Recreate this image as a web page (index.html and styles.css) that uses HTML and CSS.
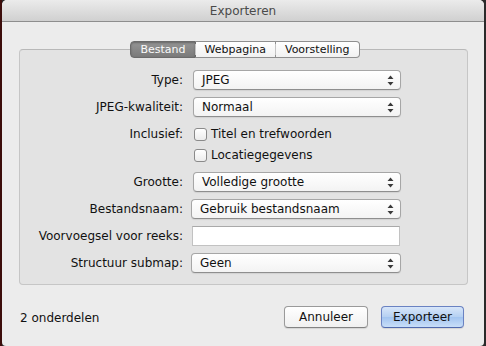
FILE: index.html
```html
<!DOCTYPE html>
<html lang="nl">
<head>
<meta charset="utf-8">
<title>Exporteren</title>
<link rel="stylesheet" href="styles.css">
</head>
<body>
<div class="window">
  <div class="titlebar">Exporteren</div>
  <div class="content">
    <div class="tabs">
      <div class="tab selected">Bestand</div>
      <div class="tab">Webpagina</div>
      <div class="tab last">Voorstelling</div>
    </div>
    <div class="box">
      <div class="form">
        <div class="row">
          <div class="label">Type:</div>
          <div class="popup"><span>JPEG</span><svg class="arrows" width="7" height="11" viewBox="0 0 7 11"><path d="M3.5 0.5 L6.5 4 L0.5 4 Z M0.5 7 L6.5 7 L3.5 10.5 Z" fill="#3a3a3a"/></svg></div>
        </div>
        <div class="row">
          <div class="label">JPEG-kwaliteit:</div>
          <div class="popup"><span>Normaal</span><svg class="arrows" width="7" height="11" viewBox="0 0 7 11"><path d="M3.5 0.5 L6.5 4 L0.5 4 Z M0.5 7 L6.5 7 L3.5 10.5 Z" fill="#3a3a3a"/></svg></div>
        </div>
        <div class="row group">
          <div class="label">Inclusief:</div>
          <div class="checks">
            <label class="check"><span class="box-check"></span>Titel en trefwoorden</label>
            <label class="check"><span class="box-check"></span>Locatiegegevens</label>
          </div>
        </div>
        <div class="row">
          <div class="label">Grootte:</div>
          <div class="popup"><span>Volledige grootte</span><svg class="arrows" width="7" height="11" viewBox="0 0 7 11"><path d="M3.5 0.5 L6.5 4 L0.5 4 Z M0.5 7 L6.5 7 L3.5 10.5 Z" fill="#3a3a3a"/></svg></div>
        </div>
        <div class="row">
          <div class="label">Bestandsnaam:</div>
          <div class="popup wide"><span>Gebruik bestandsnaam</span><svg class="arrows" width="7" height="11" viewBox="0 0 7 11"><path d="M3.5 0.5 L6.5 4 L0.5 4 Z M0.5 7 L6.5 7 L3.5 10.5 Z" fill="#3a3a3a"/></svg></div>
        </div>
        <div class="row">
          <div class="label">Voorvoegsel voor reeks:</div>
          <div class="field"></div>
        </div>
        <div class="row">
          <div class="label">Structuur submap:</div>
          <div class="popup wide"><span>Geen</span><svg class="arrows" width="7" height="11" viewBox="0 0 7 11"><path d="M3.5 0.5 L6.5 4 L0.5 4 Z M0.5 7 L6.5 7 L3.5 10.5 Z" fill="#3a3a3a"/></svg></div>
        </div>
      </div>
    </div>
    <div class="footer">
      <div class="count">2 onderdelen</div>
      <div class="buttons">
        <div class="button">Annuleer</div>
        <div class="button default">Exporteer</div>
      </div>
    </div>
  </div>
</div>
</body>
</html>
```
FILE: styles.css
```css
html, body {
  margin: 0;
  padding: 0;
  height: 346px;
  overflow: hidden;
}
body {
  background: linear-gradient(to right, #3c0d0b 0, #3c0d0b 2px, #2a2a2a 2px, #2a2a2a 100%);
  font-family: "DejaVu Sans", "Liberation Sans", sans-serif;
  font-size: 12px;
  color: #111;
}
.window {
  margin: 0 2px;
  height: 346px;
  background: #ececec;
  border-radius: 5px 5px 4px 4px;
  overflow: hidden;
}
.titlebar {
  height: 21px;
  border-bottom: 1px solid #8e8e8e;
  background: linear-gradient(#ebebeb, #d0d0d0);
  text-align: center;
  line-height: 22px;
  font-size: 12px;
  color: #4a4a4a;
}
.content {
  padding: 19px 16px 0 17px;
}
.tabs {
  display: flex;
  justify-content: center;
  position: relative;
  z-index: 1;
  margin-left: 3px;
}
.tab {
  height: 15px;
  line-height: 15px;
  font-size: 11px;
  padding: 0 9px;
  border: 1px solid #8f8f8f;
  border-left: none;
  background: linear-gradient(#ffffff, #f1f1f1);
  color: #111;
  position: relative;
}
.tab + .tab::before {
  content: "";
  position: absolute;
  left: -1px;
  top: 2px;
  bottom: 2px;
  width: 1px;
  background: #c4c4c4;
}
.tab.selected {
  border-left: 1px solid #6e6e6e;
  border-color: #6b6b6b;
  border-radius: 4px 0 0 4px;
  background: linear-gradient(#959595, #7a7a7a);
  color: #fafafa;
  box-shadow: inset 0 1px 2px rgba(0,0,0,0.3);
}
.tab.last {
  border-radius: 0 4px 4px 0;
}
.box {
  margin-top: -9px;
  height: 214px;
  border: 1px solid #c6c6c6;
  border-top-color: #b8b8b8;
  border-radius: 4px;
  background: #e3e3e3;
  padding-top: 20px;
}
.form {
  display: flex;
  flex-direction: column;
  gap: 7px;
}
.row {
  display: flex;
  align-items: center;
  height: 20px;
}
.row.group {
  height: auto;
  align-items: flex-start;
}
.row.group .label {
  line-height: 20px;
}
.label {
  width: 163px;
  text-align: right;
  margin-right: 10px;
  white-space: nowrap;
}
.popup {
  box-sizing: border-box;
  width: 208px;
  height: 20px;
  border: 1px solid #a6a6a6;
  border-bottom-color: #8e8e8e;
  border-radius: 4px;
  background: linear-gradient(#ffffff, #f3f3f3);
  box-shadow: 0 1px 1px rgba(0,0,0,0.08);
  display: flex;
  align-items: center;
  justify-content: space-between;
  padding: 0 6px 0 8px;
}
.popup.wide {
  width: 210px;
  margin-left: -2px;
}
.arrows {
  display: block;
}
.field {
  box-sizing: border-box;
  width: 208px;
  height: 20px;
  margin-left: -1px;
  background: #fff;
  border: 1px solid #c2c2c2;
  border-top-color: #a9a9a9;
}
.checks {
  display: flex;
  flex-direction: column;
  gap: 1px;
}
.check {
  display: flex;
  align-items: center;
  height: 20px;
}
.box-check {
  box-sizing: border-box;
  width: 13px;
  height: 13px;
  margin-left: 1px;
  margin-right: 4px;
  border: 1px solid #8a8a8a;
  border-radius: 3px;
  background: linear-gradient(#ffffff, #ececec);
}
.footer {
  display: flex;
  align-items: center;
  justify-content: space-between;
  margin-top: 21px;
  padding: 0 4px 0 1px;
}
.count {
  margin-top: 1px;
}
.buttons {
  display: flex;
  gap: 13px;
}
.button {
  box-sizing: border-box;
  height: 22px;
  width: 84px;
  line-height: 20px;
  text-align: center;
  border: 1px solid #9a9a9a;
  border-bottom-color: #828282;
  border-radius: 4px;
  background: linear-gradient(#ffffff, #f0f0f0);
  box-shadow: 0 1px 1px rgba(0,0,0,0.1);
}
.button.default {
  width: 83px;
  border-color: #6a82c2;
  border-bottom-color: #506aae;
  background: linear-gradient(#d8e6f9 0%, #b5d0f2 50%, #a2c4f0 51%, #c8def8 100%);
}
```
